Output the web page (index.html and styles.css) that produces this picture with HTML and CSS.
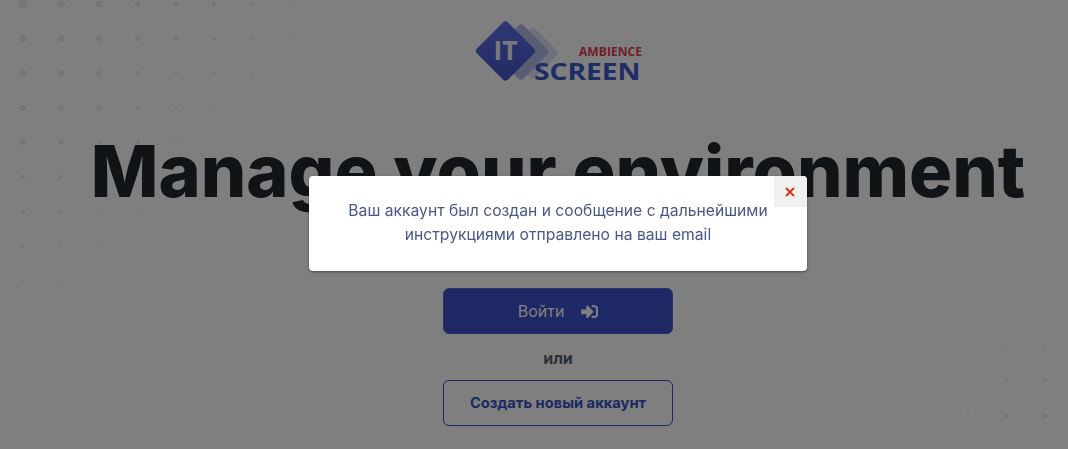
FILE: index.html
```html
<!DOCTYPE html>
<html lang="ru">
<head>
    <meta charset="UTF-8">
    <meta name="viewport" content="width=device-width, initial-scale=1.0">
    <title>IT Screen Ambience</title>
    <link rel="stylesheet" href="styles.css">
</head>
<body>
    <!-- dots in the page background -->
    <svg class="dots" width="1068" height="449" viewBox="0 0 1068 449" aria-hidden="true">
        <g fill="#ececec">
            <circle cx="23" cy="4" r="4.2"/><circle cx="61" cy="4" r="3.8"/><circle cx="99" cy="4" r="3.4"/><circle cx="138" cy="4" r="3"/><circle cx="176" cy="4" r="2.6"/><circle cx="214" cy="4" r="2.2"/><circle cx="253" cy="4" r="1.8"/><circle cx="291" cy="4" r="1.4"/>
            <circle cx="23" cy="38.5" r="3.85"/><circle cx="61" cy="38.5" r="3.45"/><circle cx="99" cy="38.5" r="3.05"/><circle cx="138" cy="38.5" r="2.65"/><circle cx="176" cy="38.5" r="2.25"/><circle cx="214" cy="38.5" r="1.85"/><circle cx="253" cy="38.5" r="1.45"/><circle cx="291" cy="38.5" r="1.05"/>
            <circle cx="23" cy="73" r="3.5"/><circle cx="61" cy="73" r="3.1"/><circle cx="99" cy="73" r="2.7"/><circle cx="138" cy="73" r="2.3"/><circle cx="176" cy="73" r="1.9"/><circle cx="214" cy="73" r="1.5"/><circle cx="253" cy="73" r="1.1"/>
            <circle cx="23" cy="108" r="3.15"/><circle cx="61" cy="108" r="2.75"/><circle cx="99" cy="108" r="2.35"/><circle cx="138" cy="108" r="1.95"/><circle cx="176" cy="108" r="1.55"/><circle cx="214" cy="108" r="1.15"/><circle cx="253" cy="108" r="0.75"/>
            <circle cx="23" cy="142" r="2.8"/><circle cx="61" cy="142" r="2.4"/><circle cx="99" cy="142" r="2"/><circle cx="138" cy="142" r="1.6"/><circle cx="176" cy="142" r="1.2"/><circle cx="214" cy="142" r="0.8"/>
            <circle cx="23" cy="177" r="2.45"/><circle cx="61" cy="177" r="2.05"/>
            <circle cx="23" cy="212" r="2.1"/><circle cx="61" cy="212" r="1.7"/><circle cx="99" cy="212" r="1.3"/><circle cx="138" cy="212" r="0.9"/><circle cx="176" cy="212" r="0.5"/>
            <circle cx="23" cy="246" r="1.75"/><circle cx="61" cy="246" r="1.35"/><circle cx="99" cy="246" r="0.95"/><circle cx="138" cy="246" r="0.55"/>
            <circle cx="23" cy="281" r="1.4"/><circle cx="61" cy="281" r="1"/><circle cx="99" cy="281" r="0.6"/>
            <circle cx="1045" cy="312" r="1"/><circle cx="1006" cy="312" r="0.6"/>
            <circle cx="1045" cy="346.5" r="1.6"/><circle cx="1006" cy="346.5" r="1"/><circle cx="968" cy="346.5" r="0.5"/>
            <circle cx="1045" cy="381" r="2"/><circle cx="1006" cy="381" r="1.6"/><circle cx="968" cy="381" r="0.9"/>
            <circle cx="1045" cy="416" r="2.5"/><circle cx="1006" cy="416" r="2"/><circle cx="968" cy="416" r="1.5"/><circle cx="929" cy="416" r="0.7"/>
        </g>
    </svg>

    <div class="page">
        <svg class="logo" width="170" height="66" viewBox="0 0 170 66" role="img" aria-label="IT Screen Ambience">
            <defs>
                <linearGradient id="logo-grad" x1="0" y1="0" x2="1" y2="1">
                    <stop offset="0" stop-color="#5c72e6"/>
                    <stop offset="1" stop-color="#4654c8"/>
                </linearGradient>
            </defs>
            <rect x="-19" y="-19" width="38" height="38" rx="4" transform="translate(59.5 35) rotate(45)" fill="#dce2f6"/>
            <rect x="-20.5" y="-20.5" width="41" height="41" rx="4" transform="translate(48 34) rotate(45)" fill="#b2bce8"/>
            <rect x="-22" y="-22" width="44" height="44" rx="4" transform="translate(32.5 33) rotate(45)" fill="url(#logo-grad)"/>
            <text class="logo-it" x="20.5" y="42" textLength="24" lengthAdjust="spacingAndGlyphs">IT</text>
            <text class="logo-ambience" x="106" y="38" textLength="63" lengthAdjust="spacingAndGlyphs">AMBIENCE</text>
            <text class="logo-screen" x="61" y="62" textLength="106.5" lengthAdjust="spacingAndGlyphs">SCREEN</text>
        </svg>

        <h1 class="title">Manage your environment</h1>

        <div class="actions">
            <button class="btn btn-login">Войти
                <svg class="btn-icon" width="17" height="17" viewBox="0 0 512 512" aria-hidden="true"><path fill="currentColor" d="M416 448h-84c-6.6 0-12-5.4-12-12v-40c0-6.6 5.4-12 12-12h84c17.7 0 32-14.3 32-32V160c0-17.7-14.3-32-32-32h-84c-6.6 0-12-5.4-12-12V76c0-6.6 5.4-12 12-12h84c53 0 96 43 96 96v192c0 53-43 96-96 96zm-47-201L201 79c-15-15-41-4.5-41 17v96H24c-13.3 0-24 10.7-24 24v96c0 13.3 10.7 24 24 24h136v96c0 21.5 26 32 41 17l168-168c9.3-9.4 9.3-24.6 0-34z"/></svg>
            </button>
            <div class="or">или</div>
            <button class="btn btn-register">Создать новый аккаунт</button>
        </div>
    </div>

    <div class="overlay">
        <div class="modal">
            <button class="modal-close" aria-label="Закрыть">
                <svg width="10" height="10" viewBox="0 0 10 10" aria-hidden="true"><path d="M1 1l8 8M9 1l-8 8" stroke="currentColor" stroke-width="2" fill="none"/></svg>
            </button>
            <p class="modal-text">Ваш аккаунт был создан и сообщение с дальнейшими инструкциями отправлено на ваш email</p>
        </div>
    </div>
</body>
</html>
```

FILE: styles.css
```css
:root {
    --primary-color: #3a50c8;
    --modal-text: #4a5688;
}

html, body {
    height: 100%;
}

body {
    font-family: Inter, 'Noto Sans', sans-serif;
    margin: 0;
    padding: 0;
    background-color: white;
    overflow: hidden;
    position: relative;
}

.dots {
    position: absolute;
    top: 0;
    left: 0;
}

.page {
    position: relative;
    display: flex;
    flex-direction: column;
    align-items: center;
    padding: 18px 0 0 48px;
}

.logo {
    display: block;
    overflow: visible;
}

.logo text {
    font-family: 'Open Sans', sans-serif;
    font-weight: 700;
}

.logo-it {
    font-size: 26px;
    font-weight: 600;
    fill: #f2f3fa;
}

.logo-ambience {
    font-size: 12.5px;
    fill: #e63a55;
}

.logo-screen {
    font-size: 24px;
    fill: #3e5acc;
}

.title {
    margin: 44px 0 0;
    font-size: 71.8px;
    line-height: 86px;
    font-weight: 800;
    color: #22282e;
    white-space: nowrap;
}

.actions {
    display: flex;
    flex-direction: column;
    align-items: center;
    margin-top: 74px;
}

.btn {
    width: 230px;
    border-radius: 6px;
    font-family: inherit;
    cursor: pointer;
}

.btn-login {
    height: 46px;
    display: flex;
    align-items: center;
    justify-content: center;
    gap: 17px;
    background-color: var(--primary-color);
    border: 1px solid #5468d8;
    color: white;
    font-size: 16px;
}

.btn-icon {
    display: block;
}

.or {
    margin: 15px 0 13px;
    font-size: 16px;
    line-height: 18px;
    font-weight: 700;
    color: #5c6074;
}

.btn-register {
    height: 46px;
    background-color: white;
    border: 1px solid var(--primary-color);
    color: var(--primary-color);
    font-weight: 700;
    font-size: 14.7px;
}

.overlay {
    position: fixed;
    top: 0;
    left: 0;
    right: 0;
    bottom: 0;
    background-color: rgba(0, 0, 0, 0.5);
    display: flex;
    justify-content: center;
    align-items: flex-start;
    padding: 176px 0 0 48px;
}

.modal {
    position: relative;
    width: 498px;
    height: 95px;
    box-sizing: border-box;
    padding: 23px 30px 0;
    background-color: white;
    border-radius: 4px;
    box-shadow: 0 1px 3px rgba(0, 0, 0, 0.4);
}

.modal-close {
    position: absolute;
    top: 0;
    right: 0;
    width: 33px;
    height: 31px;
    padding: 0 2px 0 0;
    display: flex;
    align-items: center;
    justify-content: center;
    background-color: #f0f0f0;
    border: none;
    border-top-right-radius: 4px;
    color: #e0321e;
}

.modal-text {
    margin: 0;
    font-size: 15.7px;
    line-height: 24px;
    text-align: center;
    color: var(--modal-text);
}
```
